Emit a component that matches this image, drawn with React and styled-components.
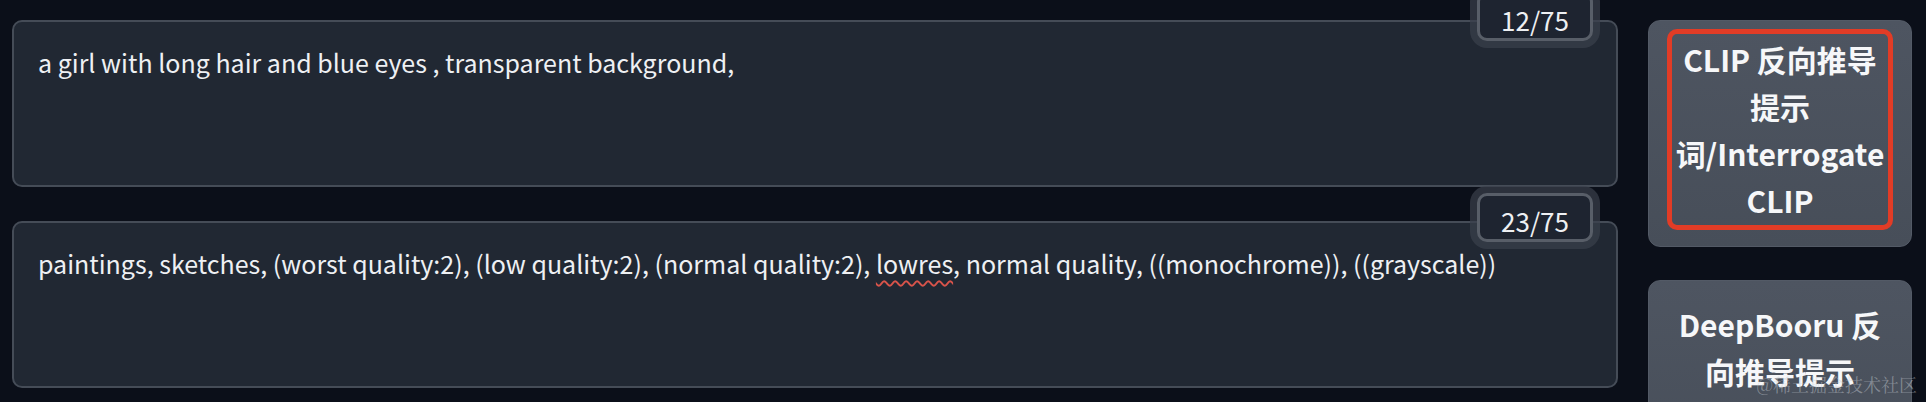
import React from "react";
import styled, { createGlobalStyle } from "styled-components";

const GlobalStyle = createGlobalStyle`
  html, body {
    margin: 0;
    padding: 0;
    background: #0b0f19;
  }
  body {
    font-family: "Noto Sans CJK SC", "Noto Sans", sans-serif;
  }
`;

const prompts = [
  {
    count: "12/75",
    text: ["a girl with long hair and blue eyes , transparent background,"],
  },
  {
    count: "23/75",
    text: [
      "paintings, sketches, (worst quality:2), (low quality:2), (normal quality:2), ",
      { typo: "lowres" },
      ", normal quality, ((monochrome)), ((grayscale))",
    ],
  },
];

const App = () => {
  return (
    <Page>
      <GlobalStyle />
      <Prompts>
        {prompts.map((p, i) => (
          <Field key={i}>
            <Counter>{p.count}</Counter>
            <PromptBox>
              {p.text.map((part, j) =>
                typeof part === "string" ? (
                  <React.Fragment key={j}>{part}</React.Fragment>
                ) : (
                  <Typo key={j}>{part.typo}</Typo>
                )
              )}
            </PromptBox>
          </Field>
        ))}
      </Prompts>
      <Actions>
        <ActionButton $tall>
          <Highlight>CLIP 反向推导提示词/Interrogate CLIP</Highlight>
        </ActionButton>
        <ActionButton>DeepBooru 反向推导提示</ActionButton>
      </Actions>
      <Watermark>@稀土掘金技术社区</Watermark>
    </Page>
  );
};

const Page = styled.div`
  position: relative;
  display: flex;
  gap: 30px;
  height: 402px;
  box-sizing: border-box;
  padding: 20px 14px 0 12px;
  background: #0b0f19;
  overflow: hidden;
`;

const Prompts = styled.div`
  flex: 1;
  display: flex;
  flex-direction: column;
  gap: 34px;
`;

const Field = styled.div`
  position: relative;
  height: 167px;
`;

const PromptBox = styled.div`
  height: 100%;
  box-sizing: border-box;
  padding: 21px 17px 21px 24px;
  background: #212833;
  border: 2px solid #454c57;
  border-radius: 10px;
  color: #eef0f3;
  font-size: 25px;
  line-height: 38px;
`;

const Typo = styled.span`
  text-decoration: underline wavy #d9534a;
  text-decoration-thickness: 2px;
  text-underline-offset: 6px;
`;

const Counter = styled.div`
  position: absolute;
  top: -28px;
  right: 25px;
  width: 116px;
  height: 49px;
  box-sizing: border-box;
  display: flex;
  align-items: center;
  justify-content: center;
  padding-top: 5px;
  background: #1e2430;
  border: 3px solid #585e68;
  border-radius: 10px;
  box-shadow: 0 0 0 7px rgba(58, 64, 76, 0.7);
  color: #eef0f3;
  font-size: 26px;
  z-index: 1;
`;

const Actions = styled.div`
  width: 264px;
  display: flex;
  flex-direction: column;
  gap: 33px;
`;

const ActionButton = styled.button`
  flex-shrink: 0;
  height: ${(p) => (p.$tall ? "227px" : "200px")};
  box-sizing: border-box;
  display: flex;
  align-items: ${(p) => (p.$tall ? "stretch" : "flex-start")};
  justify-content: center;
  padding: ${(p) => (p.$tall ? "8px 18px 16px" : "20px 22px 0")};
  background: linear-gradient(to bottom, #4e5561, #474e59);
  border: 1px solid #535a66;
  border-radius: 12px;
  color: #f6f7f9;
  font-family: "Noto Sans CJK SC", sans-serif;
  font-weight: 700;
  font-size: 30px;
  line-height: 47px;
  text-align: center;
`;

const Highlight = styled.span`
  flex: 1;
  display: flex;
  align-items: center;
  justify-content: center;
  border: 5px solid #e23c26;
  border-radius: 10px;
`;

const Watermark = styled.div`
  position: absolute;
  right: 9px;
  bottom: 5px;
  color: rgba(200, 205, 212, 0.45);
  font-size: 18px;
  font-family: "Noto Serif CJK SC", "Noto Sans CJK SC", serif;
`;

export default App;
